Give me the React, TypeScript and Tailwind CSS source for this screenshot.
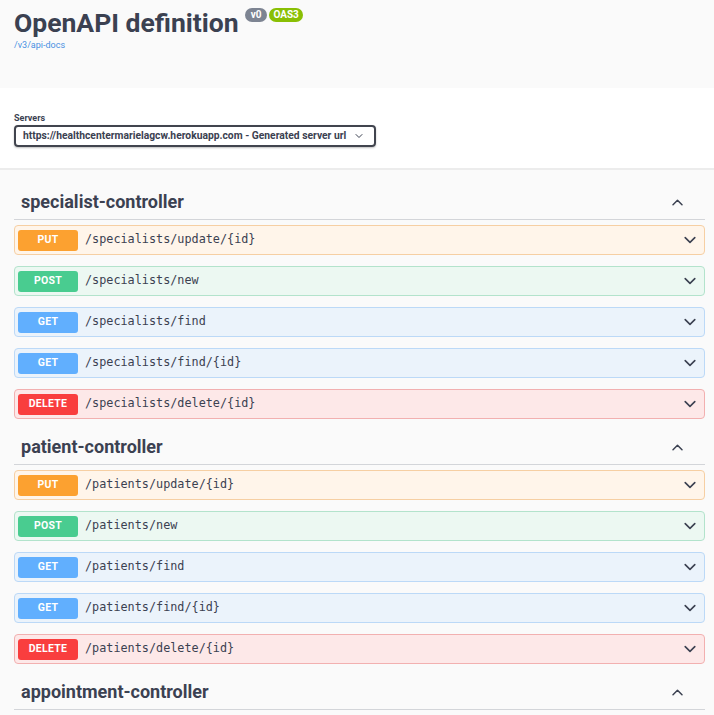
import type { ReactNode } from 'react';

type Method = 'PUT' | 'POST' | 'GET' | 'DELETE';

interface Op {
  method: Method;
  path: string;
}

const methodStyles: Record<Method, { row: string; badge: string }> = {
  PUT: { row: 'bg-[#fff5ea] border-[#f6cfa3]', badge: 'bg-[#fca130]' },
  POST: { row: 'bg-[#ecf8f2] border-[#b3e3cc]', badge: 'bg-[#49cc90]' },
  GET: { row: 'bg-[#ebf3fb] border-[#bcd9f7]', badge: 'bg-[#61affe]' },
  DELETE: { row: 'bg-[#fde8e8] border-[#f2b0b0]', badge: 'bg-[#f93e3e]' },
};

const sections: { name: string; ops: Op[] }[] = [
  {
    name: 'specialist-controller',
    ops: [
      { method: 'PUT', path: '/specialists/update/{id}' },
      { method: 'POST', path: '/specialists/new' },
      { method: 'GET', path: '/specialists/find' },
      { method: 'GET', path: '/specialists/find/{id}' },
      { method: 'DELETE', path: '/specialists/delete/{id}' },
    ],
  },
  {
    name: 'patient-controller',
    ops: [
      { method: 'PUT', path: '/patients/update/{id}' },
      { method: 'POST', path: '/patients/new' },
      { method: 'GET', path: '/patients/find' },
      { method: 'GET', path: '/patients/find/{id}' },
      { method: 'DELETE', path: '/patients/delete/{id}' },
    ],
  },
  { name: 'appointment-controller', ops: [] },
];

function Chevron({ up = false, className = '' }: { up?: boolean; className?: string }) {
  return (
    <svg viewBox="0 0 20 20" className={className} fill="none" stroke="currentColor" strokeWidth="2" strokeLinecap="round" strokeLinejoin="round">
      {up ? <path d="M4 13l6-6 6 6" /> : <path d="M4 7l6 6 6-6" />}
    </svg>
  );
}

function OpRow({ method, path }: Op) {
  const s = methodStyles[method];
  return (
    <div className={`flex items-center h-[30px] rounded-[4px] border ${s.row} pl-[3px] pr-[6px]`}>
      <span className={`${s.badge} w-[60px] h-[21px] rounded-[3px] flex items-center justify-center text-white text-[10.5px] font-bold tracking-[0.3px]`}>
        {method}
      </span>
      <span className="ml-[7px] flex-1 font-['DejaVu_Sans_Mono',monospace] text-[11.8px] text-[#3b4151]">{path}</span>
      <Chevron className="w-[16px] h-[16px] text-[#3b4151]" />
    </div>
  );
}

function Section({ name, children }: { name: string; children?: ReactNode }) {
  return (
    <div>
      <div className="flex items-center border-b border-[#d3d5d9] pt-[17px] pb-[6px] pl-[7px] pr-[20px]">
        <h3 className="flex-1 text-[18px] leading-[22px] font-bold text-[#3b4151]">{name}</h3>
        <Chevron up className="w-[15px] h-[15px] text-[#3b4151]" />
      </div>
      <div className="flex flex-col gap-[11px] mt-[5px]">{children}</div>
    </div>
  );
}

export default function App() {
  return (
    <div className="w-[714px] h-[715px] overflow-hidden bg-[#fafafa] font-['Roboto',sans-serif] text-[#3b4151]">
      <div className="h-[88px] px-[14px] pt-[6px]">
        <div className="flex items-start">
          <h2 className="text-[26.5px] leading-[34px] font-bold text-[#3b4151]">OpenAPI definition</h2>
          <span className="ml-[6px] mt-[2px] h-[14px] px-[6px] rounded-full bg-[#7d8492] text-white text-[10px] font-bold leading-[14px]">v0</span>
          <span className="ml-[2px] mt-[2px] h-[14px] px-[4px] rounded-full bg-[#89bf04] text-white text-[10px] font-bold leading-[14px]">OAS3</span>
        </div>
        <div className="text-[9px] leading-[10px] text-[#4990e2]">/v3/api-docs</div>
      </div>
      <div className="h-[80px] bg-white px-[14px] pt-[24px]">
        <div className="text-[9px] leading-[12px] font-bold text-[#3b4151]">Servers</div>
        <div className="mt-[1px] w-[362px] h-[22px] border-2 border-[#41444e] rounded-[4px] flex items-center pl-[7px] pr-[10px] shadow-[0_1px_2px_rgba(0,0,0,0.25)]">
          <span className="flex-1 text-[10.3px] font-bold text-[#3b4151]">https://healthcentermarielagcw.herokuapp.com - Generated server url</span>
          <Chevron className="w-[10px] h-[10px] text-[#3b4151]" />
        </div>
      </div>
      <div className="h-[2px] bg-[#ececec]" />
      <div className="pt-[4px] pl-[14px] pr-[9px]">
        {sections.map((sec) => (
          <Section key={sec.name} name={sec.name}>
            {sec.ops.map((op) => (
              <OpRow key={op.path} {...op} />
            ))}
          </Section>
        ))}
      </div>
    </div>
  );
}
